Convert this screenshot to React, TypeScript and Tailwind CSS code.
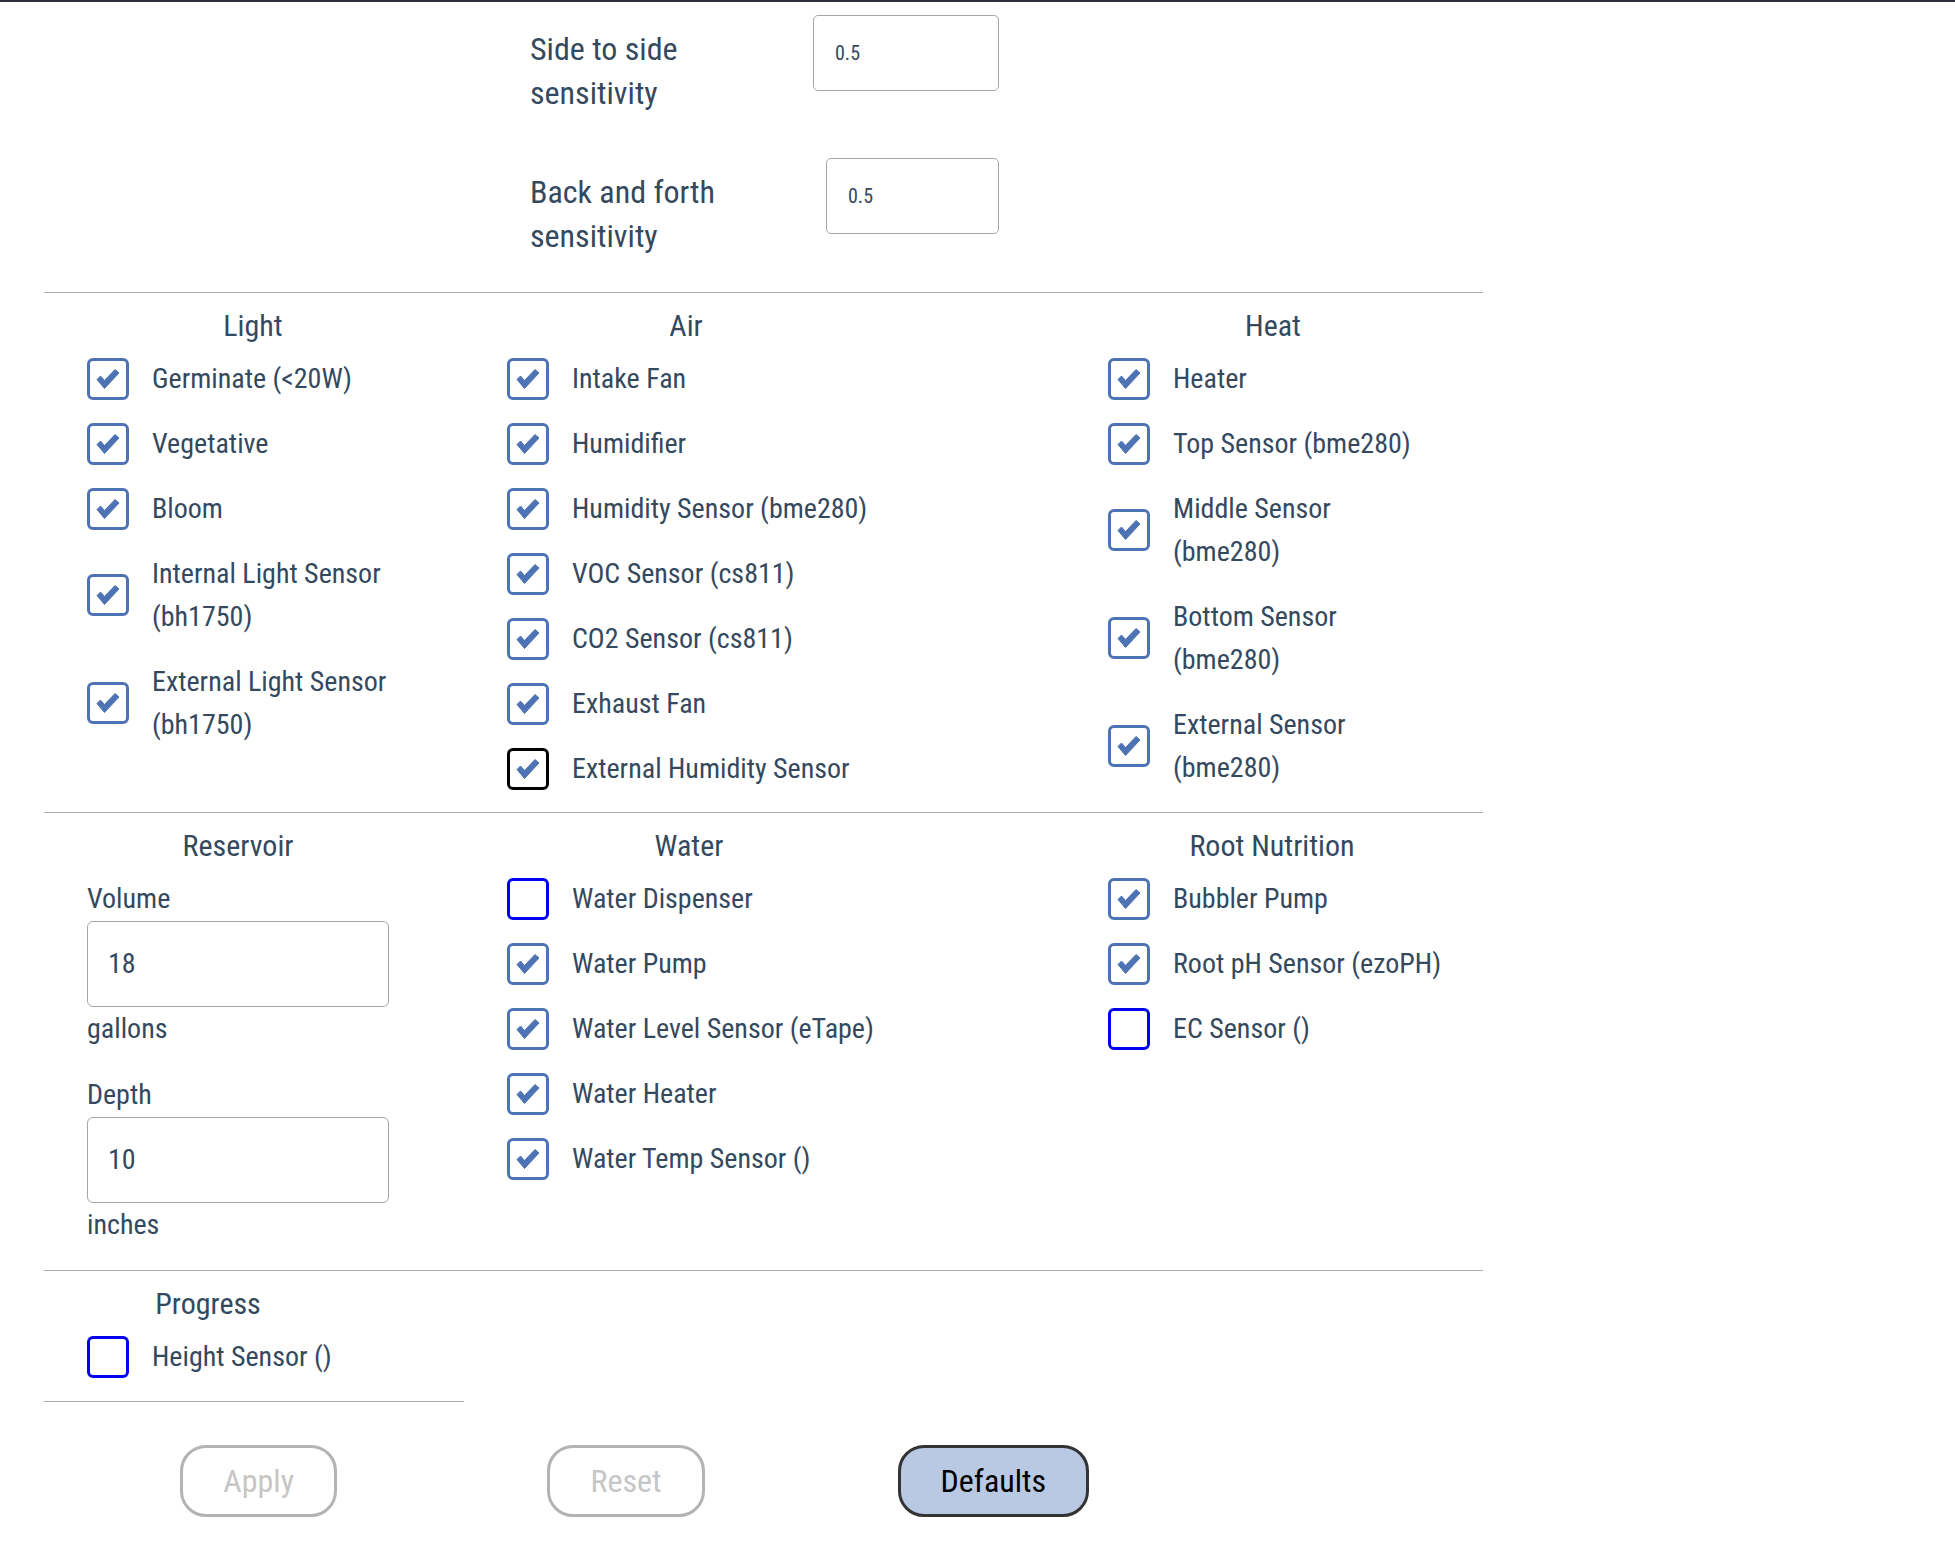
import React from 'react';

type Item = { label: string[]; state?: 'on' | 'off' | 'focus' };

const font = {
    fontFamily: "'Roboto Condensed', 'Open Sans', 'Liberation Sans', sans-serif",
};

const Check = ({ state = 'on' }: { state?: 'on' | 'off' | 'focus' }) => {
    const border =
        state === 'off'
            ? 'border-[#0000ee]'
            : state === 'focus'
              ? 'border-black'
              : 'border-[#4e73b5]';
    return (
        <div className={`flex h-[42px] w-[42px] shrink-0 items-center justify-center rounded-[6px] border-[3px] ${border}`}>
            {state !== 'off' && (
                <svg width="36" height="36" viewBox="0 0 36 36">
                    <path d="M7 18.5 L10.5 15 L14.5 19.5 L25 8.5 L29 12 L14.5 27.5 Z" fill="#4e73b5" strokeLinejoin="round" stroke="#4e73b5" strokeWidth={1} />
                </svg>
            )}
        </div>
    );
};

const Row = ({ item }: { item: Item }) => (
    <div className="flex items-center gap-[23px]">
        <Check state={item.state} />
        <span className="whitespace-nowrap text-[28px] leading-[43px] text-[#34495e]">
            {item.label.map((l, i) => (
                <React.Fragment key={i}>
                    {i > 0 && <br />}
                    {l}
                </React.Fragment>
            ))}
        </span>
    </div>
);

const Heading = ({ children }: { children: React.ReactNode }) => (
    <div className="mb-[10px] whitespace-nowrap text-center text-[30px] leading-[43px] text-[#34495e]">{children}</div>
);

const Column = ({ title, items, className }: { title: string; items: Item[]; className: string }) => (
    <div className={className}>
        <Heading>{title}</Heading>
        <div className="flex flex-col gap-[22px]">
            {items.map((it, i) => (
                <Row key={i} item={it} />
            ))}
        </div>
    </div>
);

const light: Item[] = [
    { label: ['Germinate (<20W)'] },
    { label: ['Vegetative'] },
    { label: ['Bloom'] },
    { label: ['Internal Light Sensor', '(bh1750)'] },
    { label: ['External Light Sensor', '(bh1750)'] },
];

const air: Item[] = [
    { label: ['Intake Fan'] },
    { label: ['Humidifier'] },
    { label: ['Humidity Sensor (bme280)'] },
    { label: ['VOC Sensor (cs811)'] },
    { label: ['CO2 Sensor (cs811)'] },
    { label: ['Exhaust Fan'] },
    { label: ['External Humidity Sensor'], state: 'focus' },
];

const heat: Item[] = [
    { label: ['Heater'] },
    { label: ['Top Sensor (bme280)'] },
    { label: ['Middle Sensor', '(bme280)'] },
    { label: ['Bottom Sensor', '(bme280)'] },
    { label: ['External Sensor', '(bme280)'] },
];

const water: Item[] = [
    { label: ['Water Dispenser'], state: 'off' },
    { label: ['Water Pump'] },
    { label: ['Water Level Sensor (eTape)'] },
    { label: ['Water Heater'] },
    { label: ['Water Temp Sensor ()'] },
];

const root: Item[] = [
    { label: ['Bubbler Pump'] },
    { label: ['Root pH Sensor (ezoPH)'] },
    { label: ['EC Sensor ()'], state: 'off' },
];

const NumberField = ({ label, value, unit }: { label: string; value: string; unit: string }) => (
    <div className="flex flex-col">
        <span className="text-[28px] leading-[43px] text-[#34495e]">{label}</span>
        <div className="mt-px flex h-[86px] w-[302px] items-center rounded-[6px] border border-[#a6a6a6] pl-[20px] text-[28px] text-[#34495e]">
            {value}
        </div>
        <span className="text-[28px] leading-[43px] text-[#34495e]">{unit}</span>
    </div>
);

const SensitivityRow = ({ lines, labelW, inputW, className }: { lines: string[]; labelW: string; inputW: string; className: string }) => (
    <div className={`flex items-start ${className}`}>
        <div className={`${labelW} whitespace-nowrap pt-[12px] text-[32px] leading-[44px] text-[#34495e]`}>
            {lines[0]}
            <br />
            {lines[1]}
        </div>
        <div className={`flex h-[76px] ${inputW} items-center rounded-[5px] border border-[#a6a6a6] pl-[21px] text-[20px] text-[#34495e]`}>
            0.5
        </div>
    </div>
);

const Button = ({ children, variant }: { children: React.ReactNode; variant: 'disabled' | 'primary' }) => (
    <div
        className={`flex h-[72px] items-center justify-center rounded-[26px] border-[3px] px-[40px] text-[32px] ${
            variant === 'primary'
                ? 'border-[#333333] bg-[#b9c9e3] text-black'
                : 'border-[#b3b3b3] bg-white text-[#c6c6c6]'
        }`}
    >
        {children}
    </div>
);

export default function App() {
    return (
        <div className="min-h-screen bg-white" style={font}>
            <div className="h-[2px] bg-[#2b2f3a]" />
            <div className="pl-[44px]">
                <div className="w-[1439px]">
                    <div className="ml-[486px] pt-[13px]">
                        <SensitivityRow lines={['Side to side', 'sensitivity']} labelW="w-[283px]" inputW="w-[186px]" className="" />
                        <SensitivityRow lines={['Back and forth', 'sensitivity']} labelW="w-[296px]" inputW="w-[173px]" className="mt-[43px]" />
                    </div>

                    <div className="mt-[34px] flex items-start border-t border-[#aaaaaa] pb-[22px] pl-[43px] pt-[11px]">
                        <Column title="Light" items={light} className="w-[332px]" />
                        <Column title="Air" items={air} className="ml-[88px] w-[358px]" />
                        <Column title="Heat" items={heat} className="ml-[243px] w-[330px]" />
                    </div>

                    <div className="flex items-start border-t border-[#aaaaaa] pb-[24px] pl-[43px] pt-[11px]">
                        <div className="w-[302px]">
                            <Heading>Reservoir</Heading>
                            <NumberField label="Volume" value="18" unit="gallons" />
                            <div className="mt-[23px]">
                                <NumberField label="Depth" value="10" unit="inches" />
                            </div>
                        </div>
                        <Column title="Water" items={water} className="ml-[118px] w-[364px]" />
                        <Column title="Root Nutrition" items={root} className="ml-[237px] w-[328px]" />
                    </div>

                    <div className="border-t border-[#aaaaaa]">
                        <div className="w-[420px] border-b border-[#aaaaaa] pb-[23px] pl-[43px] pt-[11px]">
                            <Column title="Progress" items={[{ label: ['Height Sensor ()'], state: 'off' }]} className="w-[242px]" />
                        </div>
                    </div>

                    <div className="ml-[31px] mt-[43px] grid w-[1102px] grid-cols-3 justify-items-center">
                        <Button variant="disabled">Apply</Button>
                        <Button variant="disabled">Reset</Button>
                        <Button variant="primary">Defaults</Button>
                    </div>
                </div>
            </div>
        </div>
    );
}
